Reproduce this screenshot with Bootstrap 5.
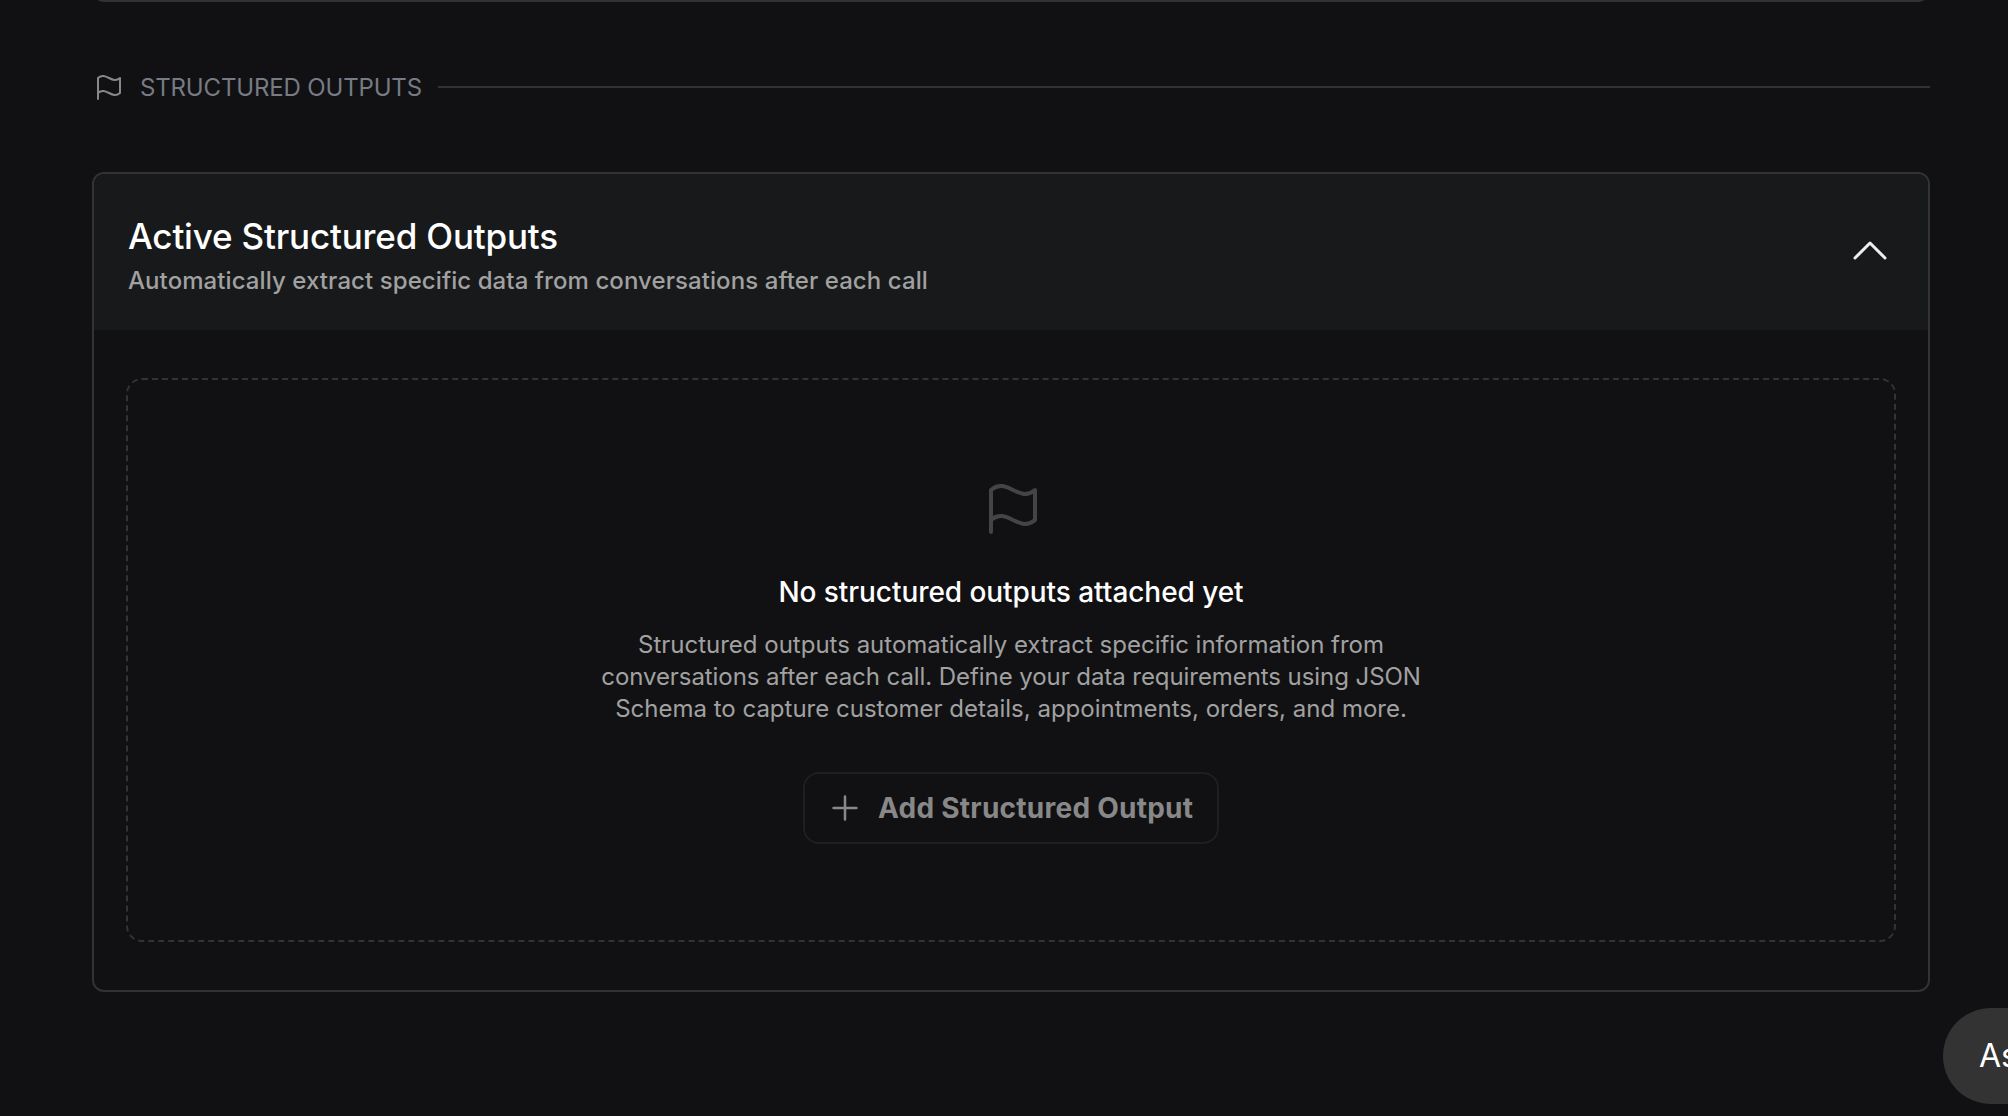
<!DOCTYPE html>
<html lang="en">
<head>
    <meta charset="UTF-8">
    <meta name="viewport" content="width=device-width, initial-scale=1.0">
    <title>Structured Outputs</title>
    <link rel="stylesheet" href="https://cdn.jsdelivr.net/npm/bootstrap@5.3.0/dist/css/bootstrap.min.css">
    <style>
        body { background: #111113; color: #fff; font-family: Inter, "Liberation Sans", sans-serif; height: 1116px; overflow: hidden; }
        .page-column { width: 1838px; margin-left: 92px; }
        .previous-clip { height: 2px; }
        .previous-panel { height: 40px; margin-top: -38px; border: 2px solid #333335; border-radius: 12px; }
        .section-heading { height: 32px; margin-top: 69px; }
        .section-label { padding-top: 2px; width: 282px; margin: 0 16px; font-size: 24px; line-height: 32px; letter-spacing: -.16px; white-space: nowrap; color: #777b84; }
        .section-rule { height: 2px; background: #333335; }
        .outputs-panel { margin-top: 69px; height: 820px; background: #111113; border: 2px solid #333335; border-radius: 12px; overflow: hidden; }
        .outputs-header { height: 156px; padding: 0 34px; background: #18191b; }
        .outputs-title { padding-top: 11px; font-size: 35px; line-height: 46px; font-weight: 500; letter-spacing: -.18px; }
        .outputs-subtitle { padding-top: 1px; font-size: 24px; line-height: 42px; font-weight: 500; letter-spacing: .08px; color: #a1a1a1; }
        .empty-area { height: 564px; margin: 48px 32px 0; border: 2px dashed #333335; border-radius: 16px; }
        .empty-flag { margin-top: 96px; color: #444; }
        .empty-title { margin-top: 32px; font-size: 28px; line-height: 40px; font-weight: 500; letter-spacing: -.06px; }
        .empty-text { margin-top: 17px; width: 840px; font-size: 24px; line-height: 32px; color: #a1a1a1; }
        .line-tight { letter-spacing: -.07px; }
        .add-output { margin-top: 47px; width: 416px; height: 72px; padding: 0 23px; gap: 16px; border: 2px solid #1f1f21; border-radius: 16px; font-size: 28px; font-weight: 700; letter-spacing: .25px; white-space: nowrap; color: #888; }
        .ask-pill { position: absolute; right: 0; top: 1008px; width: 65px; height: 96px; padding-left: 36px; border-radius: 48px 0 0 48px; background: #333; font-size: 32px; }
        .muted-icon { color: #888; }
    </style>
</head>
<body class="position-relative">
    <main class="page-column">
        <!-- Bottom edge of the previous section -->
        <div class="previous-clip overflow-hidden">
            <div class="previous-panel"></div>
        </div>

        <div class="section-heading d-flex align-items-center">
            <svg class="muted-icon flex-shrink-0" width="32" height="32" viewBox="0 0 256 256" fill="none" stroke="currentColor" stroke-width="16" stroke-linecap="round" stroke-linejoin="round">
                <path d="M48 224V56c64-55.500 112 55.500 176 0v120c-64 55.500-112-55.500-176 0"/>
            </svg>
            <span class="section-label">STRUCTURED OUTPUTS</span>
            <div class="section-rule flex-grow-1"></div>
        </div>

        <!-- Structured Outputs Panel -->
        <section class="outputs-panel">
            <div class="outputs-header d-flex align-items-center justify-content-between">
                <div>
                    <div class="outputs-title">Active Structured Outputs</div>
                    <div class="outputs-subtitle">Automatically extract specific data from conversations after each call</div>
                </div>
                <svg width="48" height="48" viewBox="0 0 256 256" fill="none" stroke="#eee" stroke-width="16" stroke-linecap="round" stroke-linejoin="round">
                    <path d="M48 160l80-80 80 80"/>
                </svg>
            </div>

            <div class="empty-area d-flex flex-column align-items-center text-center">
                <svg class="empty-flag flex-shrink-0" width="64" height="64" viewBox="0 0 256 256" fill="none" stroke="currentColor" stroke-width="16" stroke-linecap="round" stroke-linejoin="round">
                    <path d="M48 224V56c64-55.500 112 55.500 176 0v120c-64 55.500-112-55.500-176 0"/>
                </svg>
                <div class="empty-title">No structured outputs attached yet</div>
                <p class="empty-text mb-0">
                    Structured outputs automatically extract specific information from<br>
                    <span class="line-tight">conversations after each call. Define your data requirements using JSON</span><br>
                    Schema to capture customer details, appointments, orders, and more.
                </p>
                <button type="button" class="add-output btn d-flex align-items-center">
                    <svg class="flex-shrink-0" width="34" height="34" viewBox="0 0 256 256" fill="none" stroke="currentColor" stroke-width="19" stroke-linecap="round">
                        <path d="M42 128h172M128 42v172"/>
                    </svg>
                    Add Structured Output
                </button>
            </div>
        </section>
    </main>

    <!-- Assistant button, runs off the right edge -->
    <div class="ask-pill d-flex align-items-center overflow-hidden">Ask</div>

    <script src="https://cdn.jsdelivr.net/npm/bootstrap@5.3.0/dist/js/bootstrap.bundle.min.js"></script>
</body>
</html>
